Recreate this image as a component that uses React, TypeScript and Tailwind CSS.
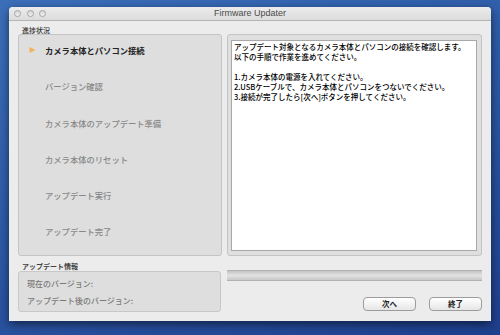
const jp = "font-['Noto_Sans_CJK_JP',sans-serif]";

const steps = [
  "カメラ本体とパソコン接続",
  "バージョン確認",
  "カメラ本体のアップデート準備",
  "カメラ本体のリセット",
  "アップデート実行",
  "アップデート完了",
];

const message = [
  "アップデート対象となるカメラ本体とパソコンの接続を確認します。",
  "以下の手順で作業を進めてください。",
  "",
  "1.カメラ本体の電源を入れてください。",
  "2.USBケーブルで、カメラ本体とパソコンをつないでください。",
  "3.接続が完了したら[次へ]ボタンを押してください。",
];

function TrafficLight() {
  return <span className="block w-[7px] h-[7px] rounded-full border border-[#a4a4a4] bg-gradient-to-b from-[#d6d6d6] to-[#f2f2f2]" />;
}

function MacButton({ label }: { label: string }) {
  return (
    <button className={`w-[53px] h-[14px] rounded-[4px] border border-[#9c9c9c] bg-gradient-to-b from-[#ffffff] to-[#e6e6e6] text-[7.5px] leading-[12px] font-bold text-[#222] ${jp}`}>
      {label}
    </button>
  );
}

export default function App() {
  return (
    <div className="w-[500px] h-[335px] overflow-hidden pl-[9px] pt-[7px] bg-[linear-gradient(160deg,#3c6fba_0%,#2d5ba8_45%,#1e3f8e_100%)]">
      <div className="w-[482px] h-[314px] rounded-t-[4px] bg-[#ececec] shadow-[0_3px_10px_rgba(0,0,0,0.55)] flex flex-col">
        {/* title bar */}
        <div className="relative h-[14px] rounded-t-[4px] bg-gradient-to-b from-[#ececec] to-[#dcdcdc] border-b border-[#b4b4b4] flex items-center">
          <div className="flex items-center gap-[5.5px] pl-[5px]">
            <TrafficLight />
            <TrafficLight />
            <TrafficLight />
          </div>
          <div className="absolute inset-0 flex items-center justify-center text-[9px] text-[#4a4a4a] font-['Liberation_Sans',sans-serif]">
            Firmware Updater
          </div>
        </div>

        <div className="flex flex-col px-[9px]">
          <div className={`h-[13px] pt-[5px] pl-[4px] text-[7px] leading-[8px] font-medium text-[#333] ${jp}`}>進捗状況</div>

          <div className="flex gap-[5px] h-[222px]">
            {/* steps */}
            <div className="w-[204px] rounded-[3px] border border-[#c4c4c4] bg-[#dedede]">
              <ul className="flex flex-col gap-[26.3px] pt-[10px]">
                {steps.map((s, i) => (
                  <li key={s} className={`relative h-[10px] leading-[10px] pl-[26px] text-[8.3px] ${jp} ${i === 0 ? "font-bold text-[#222]" : "font-medium text-[#888]"}`}>
                    {i === 0 && (
                      <svg className="absolute left-[10px] top-[2px]" width="7" height="6" viewBox="0 0 7 6">
                        <path d="M0.5 0 L6.5 3 L0.5 6 Z" fill="#f4b05a" />
                      </svg>
                    )}
                    {s}
                  </li>
                ))}
              </ul>
            </div>

            {/* message */}
            <div className="w-[255px] rounded-[3px] border border-[#c4c4c4] bg-[#dfdfdf] pt-[5px] pl-[3px] pr-[4px] pb-[4px] flex">
              <div className={`flex-1 bg-white border border-[#a8a8a8] pl-[2px] pt-[1px] text-[7.5px] leading-[10px] font-medium text-black ${jp}`}>
                {message.map((m, i) => (
                  <div key={i} className="h-[10px] whitespace-nowrap">{m}</div>
                ))}
              </div>
            </div>
          </div>

          <div className="flex gap-[5px]">
            <div className="w-[204px] flex flex-col">
              <div className={`h-[15px] pt-[6px] pl-[4px] text-[7px] leading-[8px] font-bold text-[#444] ${jp}`}>アップデート情報</div>
              <div className={`w-[203px] h-[41px] rounded-[3px] border border-[#c8c8c8] bg-[#dedede] pt-[7px] pl-[8px] flex flex-col gap-[8px] text-[8px] leading-[9px] font-medium text-[#7a7a7a] ${jp}`}>
                <div>現在のバージョン:</div>
                <div>アップデート後のバージョン:</div>
              </div>
            </div>

            <div className="w-[255px] flex flex-col pt-[14px]">
              <div className="h-[11px] border-y border-[#b2b2b2] bg-gradient-to-b from-[#c4c4c4] via-[#e2e2e2] to-[#c8c8c8]" />
              <div className="flex justify-end gap-[13px] mt-[16px]">
                <MacButton label="次へ" />
                <MacButton label="終了" />
              </div>
            </div>
          </div>
        </div>
      </div>
    </div>
  );
}
